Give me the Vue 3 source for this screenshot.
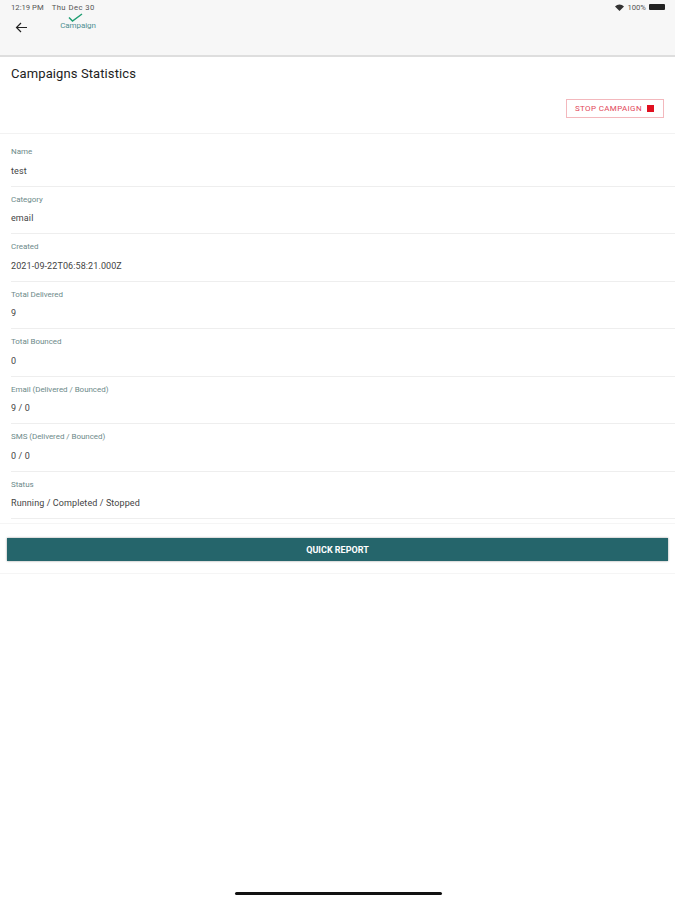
<script setup>
const rows = [
  { label: 'Name', value: 'test' },
  { label: 'Category', value: 'email' },
  { label: 'Created', value: '2021-09-22T06:58:21.000Z' },
  { label: 'Total Delivered', value: '9' },
  { label: 'Total Bounced', value: '0' },
  { label: 'Email (Delivered / Bounced)', value: '9 / 0' },
  { label: 'SMS (Delivered / Bounced)', value: '0 / 0' },
  { label: 'Status', value: 'Running / Completed / Stopped' },
]
</script>

<template>
  <div class="page">
    <header class="app-header">
      <div class="status-bar">
        <span class="status-left">
          <span>12:19 PM</span>
          <span class="status-date">Thu Dec 30</span>
        </span>
        <span class="status-right">
          <svg width="9" height="7" viewBox="0 0 9 7" aria-hidden="true">
            <path d="M4.5 7 0 2.4C2.6-.3 6.4-.3 9 2.4z" fill="#333" />
          </svg>
          100%
          <span class="battery"></span>
        </span>
      </div>
      <div class="nav-row">
        <svg class="back-icon" width="12" height="11" viewBox="0 0 12 11" aria-hidden="true">
          <path d="M12 5.500H1.500M6 1 1.500 5.500 6 10" fill="none" stroke="#222" stroke-width="1.200" />
        </svg>
        <div class="logo">
          <svg class="logo-check" width="15" height="9" viewBox="0 0 15 9" aria-hidden="true">
            <path d="M1 4.500 4.500 8 14 1" fill="none" stroke="#1f9e72" stroke-width="1.500" />
          </svg>
          <span class="logo-text">Campaign</span>
        </div>
      </div>
    </header>

    <section class="title-block">
      <h1 class="title">Campaigns Statistics</h1>
      <div class="stop-row">
        <button type="button" class="stop-button">
          STOP CAMPAIGN
          <span class="stop-icon"></span>
        </button>
      </div>
    </section>

    <section class="stats">
      <div v-for="row in rows" :key="row.label" class="stat-row">
        <div class="stat-label">{{ row.label }}</div>
        <div class="stat-value">{{ row.value }}</div>
      </div>
    </section>

    <div class="report-wrap">
      <button type="button" class="report-button">QUICK REPORT</button>
    </div>

    <div class="home-indicator"></div>
  </div>
</template>

<style scoped>
.page {
  position: relative;
  width: 675px;
  height: 900px;
  overflow: hidden;
  background: #ffffff;
  font-family: Roboto, "Liberation Sans", sans-serif;
  color: #333;
}

.app-header {
  height: 57px;
  box-sizing: border-box;
  padding: 2px 10px 0 11px;
  background: #f7f7f7;
  border-bottom: 2px solid #dedede;
}

.status-bar {
  display: flex;
  justify-content: space-between;
  align-items: center;
  height: 10px;
  font-size: 7.700px;
  color: #555;
}

.status-left {
  display: flex;
  gap: 8px;
}

.status-date {
  letter-spacing: 0.45px;
}

.status-right {
  display: flex;
  align-items: center;
  gap: 3px;
}

.battery {
  width: 16px;
  height: 6px;
  background: #222;
  border-radius: 1px;
}

.nav-row {
  display: flex;
  align-items: flex-start;
  padding-left: 4px;
}

.back-icon {
  margin-top: 10px;
}

.logo {
  position: relative;
  margin-left: 33px;
  width: 36px;
  padding-top: 9px;
  text-align: center;
}

.logo-check {
  position: absolute;
  top: 1px;
  left: 8px;
}

.logo-text {
  display: block;
  font-size: 8px;
  line-height: 10px;
  letter-spacing: -0.1px;
  color: #4f8f92;
}

.title-block {
  height: 77px;
  box-sizing: border-box;
  padding: 9px 11px 0;
  border-bottom: 1px solid #f2f2f2;
}

.title {
  margin: 0;
  font-size: 13px;
  font-weight: 400;
  line-height: 16px;
  letter-spacing: 0.1px;
  color: #222;
}

.stop-row {
  display: flex;
  justify-content: flex-end;
  margin-top: 17px;
}

.stop-button {
  display: flex;
  align-items: center;
  gap: 5px;
  width: 98px;
  height: 19px;
  padding: 0 0 0 8px;
  box-sizing: border-box;
  border: 1px solid #f3b8bd;
  background: #fff;
  font-family: inherit;
  font-size: 8px;
  letter-spacing: 0.35px;
  color: #e2485a;
  white-space: nowrap;
}

.stop-icon {
  width: 7px;
  height: 7px;
  background: #e01020;
}

.stats {
  padding: 5px 0 0 11px;
}

.stat-row {
  height: 47.500px;
  box-sizing: border-box;
  padding-top: 8px;
  border-bottom: 1px solid #eeeeee;
}

.stat-label {
  font-size: 8px;
  line-height: 10px;
  letter-spacing: -0.05px;
  color: #6d8a8a;
}

.stat-value {
  margin-top: 8.500px;
  font-size: 9px;
  line-height: 11px;
  letter-spacing: 0.1px;
  color: #444;
}

.report-wrap {
  margin-top: 4px;
  padding: 14px 7px 12px;
  border-top: 1px solid #f5f5f5;
  border-bottom: 1px solid #f5f5f5;
}

.report-button {
  display: block;
  width: 100%;
  height: 23px;
  border: none;
  background: #25656b;
  box-shadow: 0 0 2px rgba(0, 0, 0, 0.4);
  font-family: inherit;
  font-size: 9px;
  font-weight: 700;
  color: #ffffff;
}

.home-indicator {
  position: absolute;
  left: 235px;
  top: 892px;
  width: 207px;
  height: 3px;
  border-radius: 2px;
  background: #111;
}
</style>
